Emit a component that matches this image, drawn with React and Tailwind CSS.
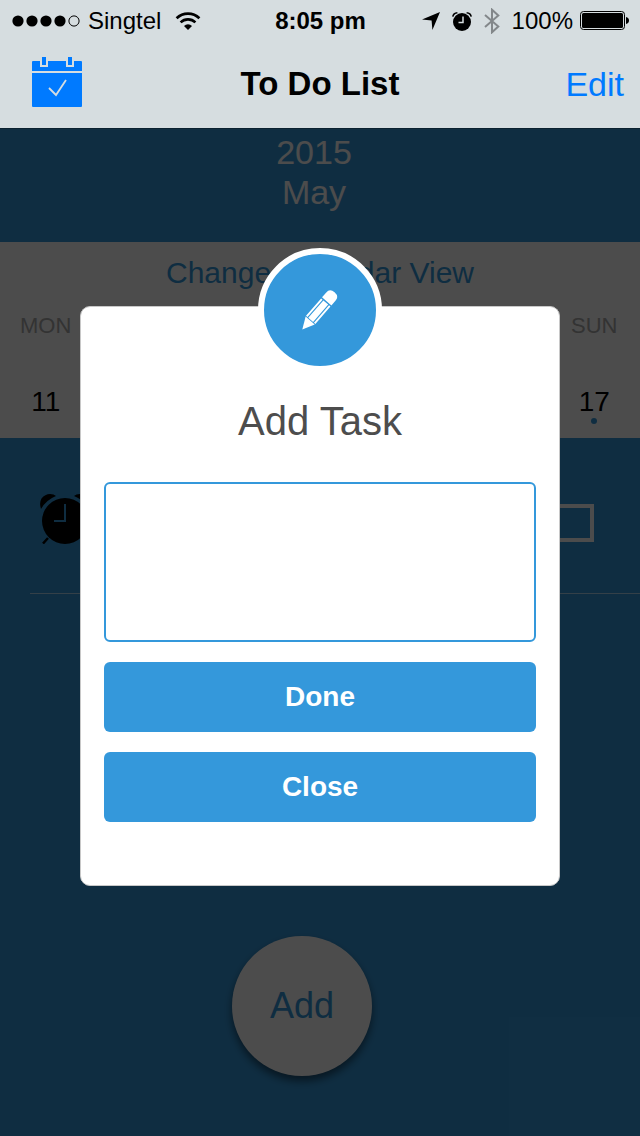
const days = [
  { name: 'MON', date: 11 },
  { name: 'SUN', date: 17, marked: true },
];

function SignalDots() {
  return (
    <svg className="h-3 w-17" viewBox="0 0 68 12" aria-hidden="true">
      <circle cx="6" cy="6" r="5.6" />
      <circle cx="20" cy="6" r="5.6" />
      <circle cx="34" cy="6" r="5.6" />
      <circle cx="48" cy="6" r="5.6" />
      <circle cx="62" cy="6" r="5.1" fill="none" stroke="#000" strokeWidth="1" />
    </svg>
  );
}

function WifiIcon() {
  return (
    <svg className="h-[18px] w-[26px]" viewBox="0 0 26 18" fill="none" stroke="#000" aria-hidden="true">
      <path d="M1.6 6.2a16.4 16.4 0 0 1 22.8 0" strokeWidth="2.7" />
      <path d="M5.6 10.4a10.6 10.6 0 0 1 14.8 0" strokeWidth="2.6" />
      <path d="M13 18l-4-4.1a5.8 5.8 0 0 1 8 0z" fill="#000" stroke="none" />
    </svg>
  );
}

function LocationIcon() {
  return (
    <svg className="h-[18px] w-[18px]" viewBox="0 0 18 18" aria-hidden="true">
      <path d="M18 0L10.400 18 9.600 8.400 0 7.600z" />
    </svg>
  );
}

function StatusAlarmIcon() {
  return (
    <svg className="h-[19px] w-5" viewBox="0 0 20 19" aria-hidden="true">
      <circle cx="10" cy="10" r="9" />
      <path d="M.8 4.600Q1.400 1.200 5.400.8M19.200 4.600Q18.600 1.200 14.600.8" fill="none" stroke="#000" strokeWidth="1.600" />
      <path d="M11 4.500v6H6.500" fill="none" stroke="#d6dde0" strokeWidth="1.500" />
    </svg>
  );
}

function BluetoothIcon() {
  return (
    <svg className="h-[26px] w-4" viewBox="0 0 16 26" fill="none" stroke="#83878a" strokeWidth="2" aria-hidden="true">
      <path d="M1 7l13.300 11.500L8 24.300V1.700l6.300 5.800L1 19" />
    </svg>
  );
}

function BatteryIcon() {
  return (
    <svg className="h-5 w-[49px]" viewBox="0 0 49 20" aria-hidden="true">
      <rect x=".5" y=".5" width="44" height="18" rx="3" fill="none" stroke="#000" />
      <rect x="2" y="2" width="41" height="15" rx="1.500" />
      <path d="M46 6q3 .8 3 3.500T46 13z" />
    </svg>
  );
}

function CalendarIcon() {
  return (
    <svg className="h-[50px] w-[50px]" viewBox="0 0 50 50" fill="#007aff" aria-hidden="true">
      <path d="M0 14V5q0-1 1-1h7v6h8V4h18v6h8V4h7q1 0 1 1v9z" />
      <path d="M10 0h4v8h-4zM36 0h4v8h-4z" />
      <path d="M0 16h50v33q0 1-1 1H1q-1 0-1-1z" />
      <path d="M17 31l7 7 10-15" fill="none" stroke="#d6dde0" strokeWidth="1.800" />
    </svg>
  );
}

function PencilIcon() {
  return (
    <svg className="h-10 w-9" viewBox="0 0 36 40" fill="#fff" aria-hidden="true">
      <g transform="translate(.3 39.500) rotate(41)">
        <path d="M0 0L-6-12H6z" />
        <path d="M-6.200-12.800h1.900v-23h-1.900zM4.300-12.800h1.900v-23H4.300zM-3.200-12.800h6.400v-23h-6.400z" />
        <path d="M-6.200-37.200v-6.500q0-5.500 6.200-5.500t6.200 5.500v6.500z" />
      </g>
    </svg>
  );
}

function AlarmClockIcon() {
  return (
    <svg className="h-[50px] w-[50px]" viewBox="0 0 50 50" aria-hidden="true">
      <circle cx="25" cy="27" r="23" />
      <path d="M1 15Q-1 9 1.500 4.500Q5 0 10 0Q14 0 16 2Q6 6 1 15zM49 15Q51 9 48.500 4.500Q45 0 40 0Q36 0 34 2Q44 6 49 15z" />
      <path d="M8 44l-5 5.500M42 44l5 5.500" stroke="#000" strokeWidth="2.500" />
      <path d="M25 10v17H14" fill="none" stroke="#3498db" strokeWidth="2" />
    </svg>
  );
}

function Header() {
  return (
    <header className="bg-[#d6dde0] text-black">
      <div className="grid h-[42px] grid-cols-[1fr_auto_1fr] items-center pr-[11px] pl-3 text-2xl">
        <div className="flex items-center gap-2">
          <SignalDots />
          <span>Singtel</span>
          <span className="pl-1.5"><WifiIcon /></span>
        </div>
        <span className="font-bold">8:05 pm</span>
        <div className="flex items-center justify-end gap-3">
          <LocationIcon />
          <StatusAlarmIcon />
          <BluetoothIcon />
          <div className="flex items-center gap-[7px]">
            <span>100%</span>
            <BatteryIcon />
          </div>
        </div>
      </div>
      <nav className="grid h-[86px] grid-cols-[1fr_auto_1fr] items-center pr-4 pb-0.5 pl-8">
        <button type="button" aria-label="Calendar" className="-mt-1 justify-self-start">
          <CalendarIcon />
        </button>
        <h1 className="pr-4 text-[33px] leading-10 font-bold">To Do List</h1>
        <button type="button" className="justify-self-end text-[34px] leading-10 text-[#007aff]">
          Edit
        </button>
      </nav>
    </header>
  );
}

function Calendar() {
  return (
    <section>
      <div className="flex h-[114px] flex-col items-center border-t border-[#26709f] pt-[3px] pr-3 text-[34px] leading-10 text-white">
        <span>2015</span>
        <span>May</span>
      </div>
      <div className="h-49 bg-white">
        <div className="flex justify-center pt-[11px]">
          <button type="button" className="text-[30px] leading-10 text-[#3498db]">
            Change Calendar View
          </button>
        </div>
        <div className="flex justify-between pt-[17px]">
          {days.map((day) => (
            <div key={day.name} className="flex w-1/7 flex-col items-center">
              <span className="text-[22px] leading-8 text-[#aaaaaa]">{day.name}</span>
              <span className="pt-11 text-[28px] leading-8 text-black">{day.date}</span>
              {day.marked && <span className="size-1.5 rounded-full bg-[#3498db]" />}
            </div>
          ))}
        </div>
      </div>
    </section>
  );
}

function TaskRow() {
  return (
    <div className="ml-[30px] flex h-39 items-center justify-between border-b border-white/60 pr-[46px] pl-2.5">
      <span className="pt-1.5">
        <AlarmClockIcon />
      </span>
      <input
        type="checkbox"
        aria-label="Task complete"
        className="mt-3.5 size-[38px] appearance-none border-4 border-white bg-transparent"
      />
    </div>
  );
}

function AddTaskDialog() {
  return (
    <div className="absolute inset-0 bg-black/70 px-20 pt-[178px]">
      <div
        role="dialog"
        aria-labelledby="dialog-title"
        className="relative flex flex-col rounded-[10px] border border-[#c8c8c8] bg-white px-[23px] pt-[90px] pb-[63px]"
      >
        <div className="absolute inset-x-0 -top-[59px] flex justify-center">
          <div className="flex size-31 items-center justify-center rounded-full border-6 border-white bg-[#3498db]">
            <PencilIcon />
          </div>
        </div>
        <h2 id="dialog-title" className="text-center text-[40px] leading-12 text-[#4d4d4d]">
          Add Task
        </h2>
        <textarea
          aria-labelledby="dialog-title"
          className="mt-[37px] h-40 resize-none rounded-md border-2 border-[#3498db] bg-white p-3 text-[28px] outline-none"
        />
        <button type="button" className="mt-5 h-[70px] rounded-md bg-[#3498db] text-[28px] font-bold text-white">
          Done
        </button>
        <button type="button" className="mt-5 h-[70px] rounded-md bg-[#3498db] text-[28px] font-bold text-white">
          Close
        </button>
      </div>
    </div>
  );
}

export default function App() {
  return (
    <div className="flex min-h-screen flex-col font-['Liberation_Sans',Arial,sans-serif]">
      <Header />
      <main className="relative flex flex-1 flex-col bg-[#3498db]">
        <Calendar />
        <TaskRow />
        <div className="flex flex-1 items-end justify-center pr-9 pb-15">
          <button
            type="button"
            className="size-35 rounded-full bg-white text-[36px] text-[#3498db] shadow-[0_5px_8px_rgba(0,0,0,0.5)]"
          >
            Add
          </button>
        </div>
        <AddTaskDialog />
      </main>
    </div>
  );
}
